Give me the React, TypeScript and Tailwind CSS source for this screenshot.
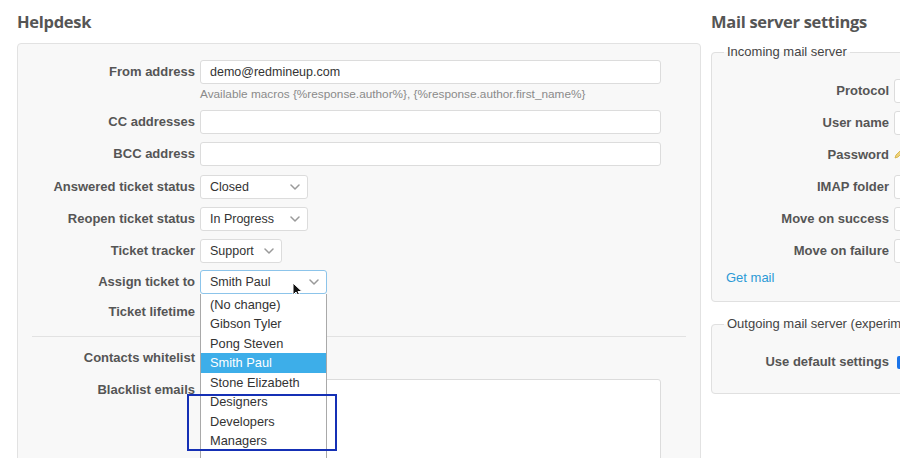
import React from "react";

const Chevron = () => (
  <svg width="10" height="6" viewBox="0 0 10 6" className="shrink-0">
    <path d="M1 1l4 4 4-4" fill="none" stroke="#9a9a9a" strokeWidth="1.5" strokeLinecap="round" strokeLinejoin="round" />
  </svg>
);

const Label = ({ children }: { children: React.ReactNode }) => (
  <label className="block w-[177px] shrink-0 text-right font-bold text-[13px] text-[#555] leading-[16px]">{children}</label>
);

const TextInput = ({ value = "", width = "w-[461px]" }: { value?: string; width?: string }) => (
  <div className={`${width} h-[24px] rounded-[3px] border border-[#dcdcdc] bg-white px-[9px] flex items-center text-[12.5px] text-[#333]`}>
    {value}
  </div>
);

const Select = ({ value, width, focused = false }: { value: string; width: string; focused?: boolean }) => (
  <div
    className={`${width} h-[24px] rounded-[3px] border bg-white pl-[9px] pr-[7px] flex items-center justify-between text-[12.5px] text-[#333] ${
      focused ? "border-[#8cc4ea]" : "border-[#dcdcdc]"
    }`}
  >
    <span>{value}</span>
    <Chevron />
  </div>
);

const assignees = ["(No change)", "Gibson Tyler", "Pong Steven", "Smith Paul", "Stone Elizabeth", "Designers", "Developers", "Managers"];

const Row = ({ label, children, className = "" }: { label: string; children?: React.ReactNode; className?: string }) => (
  <div className={`flex items-center gap-[5px] h-[24px] ${className}`}>
    <Label>{label}</Label>
    {children}
  </div>
);

const MailRow = ({ label, children, className = "" }: { label: string; children?: React.ReactNode; className?: string }) => (
  <div className={`flex items-center gap-[5px] h-[24px] ${className}`}>
    <label className="block w-[165px] shrink-0 text-right font-bold text-[13px] text-[#555] leading-[16px]">{label}</label>
    {children}
  </div>
);

const MailInput = () => <div className="w-[200px] h-[24px] rounded-[3px] border border-[#dcdcdc] bg-white" />;

export default function App() {
  return (
    <div className="w-[900px] h-[458px] overflow-hidden bg-white font-['Liberation_Sans',Arial,sans-serif] text-[13px] text-[#333]">
      <div className="flex gap-[10px] pl-[17px] pt-[10px] w-[1200px]">
        {/* Helpdesk settings */}
        <div className="w-[684px] shrink-0">
          <h2 className="h-[24px] leading-[24px] text-[16.5px] font-bold text-[#555] font-['Open_Sans','Liberation_Sans',sans-serif] tracking-[-0.3px]">
            Helpdesk
          </h2>
          <div className="mt-[9px] h-[460px] rounded-[4px] border border-[#e2e2e2] bg-[#f8f8f8] pt-[16px]">
            <Row label="From address">
              <TextInput value="demo@redmineup.com" />
            </Row>
            <p className="ml-[182px] mt-[2px] h-[16px] leading-[16px] text-[11.8px] text-[#8a8a8a]">
              Available macros {"{%response.author%}"}, {"{%response.author.first_name%}"}
            </p>
            <Row label="CC addresses" className="mt-[8px]">
              <TextInput />
            </Row>
            <Row label="BCC address" className="mt-[8px]">
              <TextInput />
            </Row>
            <Row label="Answered ticket status" className="mt-[9px]">
              <Select value="Closed" width="w-[108px]" />
            </Row>
            <Row label="Reopen ticket status" className="mt-[8px]">
              <Select value="In Progress" width="w-[108px]" />
            </Row>
            <Row label="Ticket tracker" className="mt-[8px]">
              <Select value="Support" width="w-[82px]" />
            </Row>
            <Row label="Assign ticket to" className="mt-[7px] relative z-10">
              <div className="relative">
                <Select value="Smith Paul" width="w-[127px]" focused />
                {/* mouse pointer */}
                <svg width="11" height="16" viewBox="0 0 11 16" className="absolute left-[92px] top-[12px]">
                  <path d="M1 1v12l3-3 2.5 5 2-1-2.5-4.5H10z" fill="#111" stroke="#fff" strokeWidth="1" strokeLinejoin="round" />
                </svg>
                {/* open option list */}
                <div className="absolute left-0 top-[24px] w-[127px] h-[170px] overflow-hidden border-x border-[#a9a9a9] bg-white pt-[1px]">
                  {assignees.map((name) => (
                    <div
                      key={name}
                      className={`h-[19.45px] leading-[19.45px] pl-[9px] text-[12.8px] ${
                        name === "Smith Paul" ? "bg-[#3daee9] text-white" : "text-[#333]"
                      }`}
                    >
                      {name}
                    </div>
                  ))}
                </div>
                <div className="absolute left-[-13px] top-[124px] w-[150px] h-[57px] border-2 border-[#1530b5]" />
              </div>
            </Row>
            <Row label="Ticket lifetime" className="mt-[6px]" />
            <div className="mx-[14px] mt-[12px] border-t border-[#e2e2e2]" />
            <Row label="Contacts whitelist" className="mt-[9px]" />
            <div className="mt-[9px] flex gap-[5px]">
              <div className="pt-[3px]">
                <Label>Blacklist emails</Label>
              </div>
              <div className="w-[461px] h-[120px] rounded-[3px] border border-[#dcdcdc] bg-white" />
            </div>
          </div>
        </div>

        {/* Mail server settings */}
        <div className="w-[420px] shrink-0">
          <h2 className="h-[24px] leading-[24px] text-[16.5px] font-bold text-[#555] font-['Open_Sans','Liberation_Sans',sans-serif] tracking-[-0.3px]">
            Mail server settings
          </h2>
          <fieldset className="mt-[10px] rounded-[4px] border border-[#e0e0e0] bg-[#f8f8f8] px-[12px] pt-[21px] pb-[15px]">
            <legend className="px-[3px] text-[13px] leading-[16px] text-[#444]">Incoming mail server</legend>
            <div className="mt-[-2px]">
              <MailRow label="Protocol">
                <MailInput />
              </MailRow>
              <MailRow label="User name" className="mt-[8px]">
                <MailInput />
              </MailRow>
              <MailRow label="Password" className="mt-[8px]">
                <svg width="14" height="14" viewBox="0 0 14 14" className="shrink-0 mt-[-4px]">
                  <path d="M1 12l3-1 7-7-2-2-7 7z" fill="#efd27a" stroke="#d1ad3c" strokeWidth="0.8" />
                </svg>
              </MailRow>
              <MailRow label="IMAP folder" className="mt-[8px]">
                <MailInput />
              </MailRow>
              <MailRow label="Move on success" className="mt-[8px]">
                <MailInput />
              </MailRow>
              <MailRow label="Move on failure" className="mt-[8px]">
                <MailInput />
              </MailRow>
              <a className="block mt-[7px] pl-[2px] h-[16px] leading-[16px] text-[13px] text-[#2c9ad6]">Get mail</a>
            </div>
          </fieldset>
          <fieldset className="mt-[14px] rounded-[4px] border border-[#e0e0e0] bg-[#f8f8f8] px-[12px] pt-[18px] pb-[19px]">
            <legend className="px-[3px] text-[13px] leading-[16px] text-[#444]">Outgoing mail server (experimental)</legend>
            <MailRow label="Use default settings">
              <div className="ml-[3px] w-[13px] h-[13px] rounded-[2px] bg-[#1a73e8]" />
            </MailRow>
          </fieldset>
        </div>
      </div>
    </div>
  );
}
